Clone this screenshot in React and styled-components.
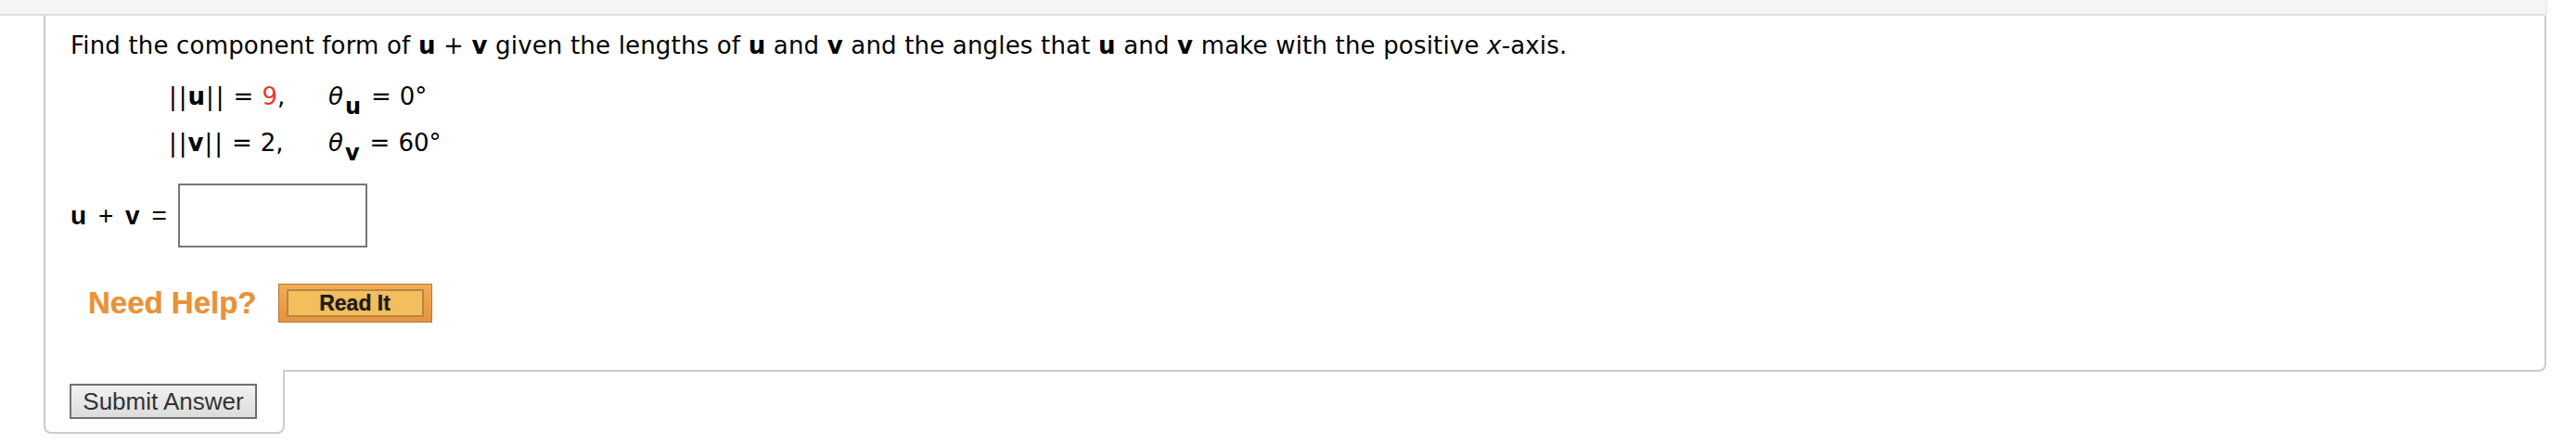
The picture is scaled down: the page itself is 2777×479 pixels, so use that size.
import styled, { createGlobalStyle } from "styled-components";

const GlobalStyle = createGlobalStyle`
  body {
    margin: 0;
    background: #fff;
  }
`;

const Page = styled.div`
  display: flex;
  flex-direction: column;
  width: 2777px;
`;

const TopBand = styled.div`
  width: 2745px;
  height: 15px;
  box-sizing: content-box;
  background: #f5f5f5;
  border-bottom: 2px solid #dedede;
  border-right: 1px solid #e6e6e6;
  border-bottom-right-radius: 4px;
`;

const Card = styled.div`
  margin-left: 47px;
  width: 2698px;
  box-sizing: border-box;
  border: 2px solid #cccccc;
  border-top: none;
  border-radius: 0 0 8px 0;
  padding: 14px 0 51px 27px;
  font-family: "DejaVu Sans", Verdana, sans-serif;
  font-size: 26px;
  color: #000;
`;

const Prompt = styled.p`
  margin: 0;
  line-height: 36px;
  letter-spacing: 0.18px;
`;

const MathBlock = styled.div`
  display: grid;
  grid-template-columns: 173px auto;
  margin: 12px 0 0 105px;
`;

const MathCell = styled.div`
  line-height: 50px;
  white-space: nowrap;
`;

const Bar = styled.span`
  padding: 0 1px;
`;

const Vec = styled.b`
  font-weight: bold;
`;

const Op = styled.span`
  padding: 0 ${(p) => p.$space || 9}px;
`;

const Given = styled.span`
  color: #e8382a;
`;

const Theta = styled.i`
  font-style: italic;
  padding-right: 2px;
`;

const Sub = styled.sub`
  font-weight: bold;
  font-size: 24px;
  vertical-align: -10px;
  line-height: 0;
  padding-right: 2px;
`;

const AnswerRow = styled.div`
  display: flex;
  align-items: center;
  margin-top: 19px;
`;

const AnswerLabel = styled.span`
  font-family: "Liberation Sans", Arial, sans-serif;
  font-size: 28px;
  word-spacing: 5px;
`;

const AnswerInput = styled.input`
  width: 204px;
  height: 69px;
  box-sizing: border-box;
  margin: 0 0 0 12px;
  border: 2px solid #777;
  background: #fff;
  outline: none;
`;

const HelpRow = styled.div`
  display: flex;
  align-items: center;
  height: 42px;
  margin: 39px 0 0 19px;
  gap: 23px;
`;

const NeedHelp = styled.span`
  font-family: "Liberation Sans", Arial, sans-serif;
  font-weight: bold;
  font-size: 33px;
  color: #e8923a;
  text-shadow: 0 0 1px rgba(232, 146, 58, 0.7);
`;

const ReadIt = styled.button`
  width: 166px;
  height: 42px;
  box-sizing: border-box;
  padding: 5px 8px;
  border: 1px solid #b27a36;
  background: linear-gradient(#f5a955, #e8933d);
  cursor: pointer;
`;

const ReadItFace = styled.span`
  display: flex;
  align-items: center;
  justify-content: center;
  height: 100%;
  box-sizing: border-box;
  border: 2px solid #b58846;
  background: #f3be5c;
  font-family: "Liberation Sans", Arial, sans-serif;
  font-weight: bold;
  font-size: 23px;
  color: #1c1c1c;
  text-shadow: 0 0 1px rgba(0, 0, 0, 0.5);
`;

const SubmitTab = styled.div`
  margin: -2px 0 0 47px;
  width: 260px;
  box-sizing: border-box;
  border: 2px solid #cccccc;
  border-top: none;
  border-radius: 0 0 8px 8px;
  background: #fff;
  padding: 15px 0 14px 26px;
`;

const SubmitButton = styled.button`
  display: block;
  width: 202px;
  height: 38px;
  box-sizing: border-box;
  padding: 0;
  border: 2px solid #707070;
  background: linear-gradient(#f2f2f2, #dcdcdc);
  font-family: "Liberation Sans", Arial, sans-serif;
  font-size: 26px;
  color: #333;
  cursor: pointer;
`;

export default function App() {
  return (
    <>
      <GlobalStyle />
      <Page>
        <TopBand />
        <Card>
          <Prompt>
            Find the component form of <Vec>u</Vec> + <Vec>v</Vec> given the lengths of{" "}
            <Vec>u</Vec> and <Vec>v</Vec> and the angles that <Vec>u</Vec> and <Vec>v</Vec> make
            with the positive <i>x</i>-axis.
          </Prompt>
          <MathBlock>
            <MathCell>
              <Bar>|</Bar>
              <Bar>|</Bar>
              <Vec>u</Vec>
              <Bar>|</Bar>
              <Bar>|</Bar>
              <Op>=</Op>
              <Given>9</Given>,
            </MathCell>
            <MathCell>
              <Theta>θ</Theta>
              <Sub>u</Sub>
              <Op>=</Op>0°
            </MathCell>
            <MathCell>
              <Bar>|</Bar>
              <Bar>|</Bar>
              <Vec>v</Vec>
              <Bar>|</Bar>
              <Bar>|</Bar>
              <Op>=</Op>2,
            </MathCell>
            <MathCell>
              <Theta>θ</Theta>
              <Sub>v</Sub>
              <Op>=</Op>60°
            </MathCell>
          </MathBlock>
          <AnswerRow>
            <AnswerLabel>
              <b>u</b> + <b>v</b> =
            </AnswerLabel>
            <AnswerInput type="text" />
          </AnswerRow>
          <HelpRow>
            <NeedHelp>Need Help?</NeedHelp>
            <ReadIt>
              <ReadItFace>Read It</ReadItFace>
            </ReadIt>
          </HelpRow>
        </Card>
        <SubmitTab>
          <SubmitButton>Submit Answer</SubmitButton>
        </SubmitTab>
      </Page>
    </>
  );
}
